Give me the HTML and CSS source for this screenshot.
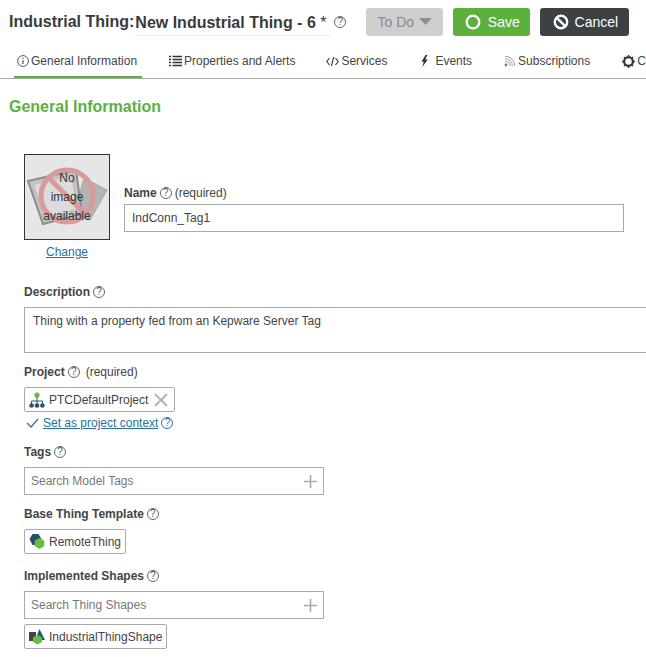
FILE: index.html
```html
<!DOCTYPE html>
<html lang="en">
<head>
<meta charset="utf-8">
<title>Industrial Thing</title>
<link rel="stylesheet" href="styles.css">
</head>
<body>
<header class="top">
  <h1 class="title">Industrial Thing:</h1>
  <div class="name-edit">New Industrial Thing - 6 <span class="star">*</span></div>
  <span class="help title-help">?</span>
  <button class="btn todo">To Do <svg class="caret" viewBox="0 0 13 7"><path d="M0 0h13L6.500 7z" fill="#8f8f8f"/></svg></button>
  <button class="btn save"><svg class="ico" viewBox="0 0 16 16"><circle cx="8" cy="8" r="6.300" fill="none" stroke="#fff" stroke-width="2.300"/></svg>Save</button>
  <button class="btn cancel"><svg class="ico" viewBox="0 0 16 16"><circle cx="8" cy="8" r="6.200" fill="none" stroke="#fff" stroke-width="2.400"/><path d="M3.800 3.800l8.400 8.400" stroke="#fff" stroke-width="2.400"/></svg>Cancel</button>
</header>
<nav class="tabs">
  <a class="tab active"><svg class="tab-ico" viewBox="0 0 12 12"><circle cx="6" cy="6" r="5.400" fill="none" stroke="#444" stroke-width="0.900"/><path d="M6 5v4M6 2.800v1.200" stroke="#444" stroke-width="1.100"/></svg>General Information</a>
  <a class="tab t-props"><svg class="tab-ico wide" viewBox="0 0 13 12"><path d="M0 1.500h2M0 4.500h2M0 7.500h2M0 10.500h2M3.500 1.500H13M3.500 4.500H13M3.500 7.500H13M3.500 10.500H13" stroke="#333" stroke-width="1.400"/></svg>Properties and Alerts</a>
  <a class="tab t-serv"><svg class="tab-ico code" viewBox="0 0 13 9"><path d="M3.500 1L.8 4.500l2.700 3.500M9.500 1l2.700 3.500L9.500 8M7.600 0L5.400 9" fill="none" stroke="#333" stroke-width="1.100"/></svg>Services</a>
  <a class="tab t-events"><svg class="tab-ico bolt" viewBox="0 0 7 12"><path d="M4.500 0L.5 6.800h2.300L1.300 12 6.800 4.400H4.200L6.300 0z" fill="#333"/></svg>Events</a>
  <a class="tab t-subs"><svg class="tab-ico" viewBox="0 0 12 12"><circle cx="2" cy="10" r="1.400" fill="#777"/><path d="M1 6.200A5 5 0 0 1 6 11M1 3.800A7.400 7.400 0 0 1 8.300 11M1 1.300A9.800 9.800 0 0 1 10.800 11" fill="none" stroke="#888" stroke-width="0.800"/></svg>Subscriptions</a>
  <a class="tab t-conf"><svg class="tab-ico" viewBox="0 0 12 12"><circle cx="6" cy="6" r="4" fill="none" stroke="#333" stroke-width="2"/><path d="M6 0v2M6 10v2M0 6h2M10 6h2M1.800 1.800l1.400 1.400M8.800 8.800l1.400 1.400M1.800 10.200l1.400-1.400M8.800 3.200l1.400-1.400" stroke="#333" stroke-width="1.300"/></svg>Configuration</a>
</nav>
<main class="content">
  <h2 class="section">General Information</h2>
  <div class="identity">
    <div class="image-col">
      <div class="image-box">
        <svg class="noimg" viewBox="0 0 86 86" aria-hidden="true">
          <path d="M60 24L83 36 66 66 50 60z" fill="#b4b4b4" stroke="#a5a5a5"/>
          <path d="M4 27L52 16 58 60 19 70z" fill="#c2c2c2" stroke="#8d8d8d" stroke-width="2"/>
          <path d="M10 31L47 22 52 55 22 63z" fill="#dcdcdc"/>
          <circle cx="43" cy="42" r="26" fill="none" stroke="#d89a9a" stroke-width="5"/>
          <path d="M25 24L61 60" stroke="#d89a9a" stroke-width="5"/>
        </svg>
        <div class="noimg-text">No<br>image<br>available</div>
      </div>
      <a class="link change">Change</a>
    </div>
    <div class="name-col">
      <div class="label name-label"><b>Name</b><span class="help">?</span>(required)</div>
      <div class="input name-input">IndConn_Tag1</div>
    </div>
  </div>
  <div class="label desc-label"><b>Description</b><span class="help">?</span></div>
  <div class="input textarea">Thing with a property fed from an Kepware Server Tag</div>

  <div class="label project-label"><b>Project</b><span class="help">?</span><span class="req">(required)</span></div>
  <div class="chip project-chip">
    <svg class="chip-ico" viewBox="0 0 16 16"><circle cx="8" cy="3" r="2.600" fill="#6ab343"/><path d="M8 5v4M2.500 12V9h11v3M8 9v3" fill="none" stroke="#24577a" stroke-width="1"/><circle cx="2.600" cy="13.500" r="2.300" fill="#24577a"/><circle cx="8" cy="13.500" r="2.300" fill="#24577a"/><circle cx="13.400" cy="13.500" r="2.300" fill="#24577a"/></svg>
    PTCDefaultProject
    <svg class="x" viewBox="0 0 14 14"><path d="M1 1l12 12M13 1L1 13" stroke="#b5b5b5" stroke-width="2"/></svg>
  </div>
  <div class="context">
    <svg class="check" viewBox="0 0 13 10"><path d="M1 5l4 4 7-8" fill="none" stroke="#2f6f9f" stroke-width="1.200"/></svg>
    <a class="link">Set as project context</a>
    <span class="help blue">?</span>
  </div>

  <div class="label tags-label"><b>Tags</b><span class="help">?</span></div>
  <div class="input search"><span>Search Model Tags</span><svg class="plus" viewBox="0 0 13 13"><path d="M6.500 0v13M0 6.500h13" stroke="#aaa" stroke-width="1.600"/></svg></div>

  <div class="label base-label"><b>Base Thing Template</b><span class="help">?</span></div>
  <div class="chip">
    <svg class="chip-ico" viewBox="0 0 16 16"><path d="M3.500 0h6l3 5-3 6h-6L.5 5z" fill="#24506b"/><path d="M10.500 4l4.800 2.800v5.400L10.500 15l-4.800-2.800V6.800z" fill="#6abf3f"/></svg>
    RemoteThing
  </div>

  <div class="label shapes-label"><b>Implemented Shapes</b><span class="help">?</span></div>
  <div class="input search"><span>Search Thing Shapes</span><svg class="plus" viewBox="0 0 13 13"><path d="M6.500 0v13M0 6.500h13" stroke="#aaa" stroke-width="1.600"/></svg></div>
  <div class="chip shape-chip">
    <svg class="chip-ico" viewBox="0 0 16 16"><path d="M0 3h7v9H0z" fill="#444"/><path d="M10.500 0L16 11H6z" fill="#24577a"/><path d="M8.500 6l4.500 2.500v4.500l-4.500 2.500L4 13V8.500z" fill="#6abf3f"/></svg>
    IndustrialThingShape
  </div>
</main>
</body>
</html>
```

FILE: styles.css
```css
* { box-sizing: border-box; }
html, body { margin: 0; padding: 0; height: 657px; overflow: hidden; background: #fff; }
body { width: 646px; font-family: "Liberation Sans", Arial, sans-serif; font-size: 12px; color: #444; }

.top { display: flex; align-items: center; height: 44px; padding: 8px 0 8px 9px; }
.title { margin: 0; font-size: 16px; font-weight: bold; color: #3a3a3a; white-space: nowrap; }
.name-edit { width: 196px; margin-left: 1px; height: 28px; line-height: 30px; font-size: 16px; font-weight: bold; color: #3a3a3a; border-bottom: 1px solid #eee; white-space: nowrap; }
.star { font-weight: normal; }
.help { display: inline-flex; align-items: center; justify-content: center; width: 12px; height: 12px; flex: none; border: 1px solid #666; border-radius: 50%; font-size: 10px; line-height: 10px; font-weight: normal; color: #555; }
.title-help { margin-left: 3px; margin-right: 20px; }
.btn { display: flex; align-items: center; justify-content: center; height: 28px; border: 0; border-radius: 3px; font-family: inherit; font-size: 14px; padding: 0; color: #fff; }
.todo { width: 77px; background: #cfcfcf; color: #8a8a8a; gap: 5px; margin-right: 10px; }
.caret { width: 13px; height: 7px; margin-top: -2px; }
.save { width: 77px; background: #5bb13c; margin-right: 10px; gap: 7px; padding-left: 1px; }
.cancel { width: 89px; background: #3b4145; gap: 6px; padding-left: 1px; }
.ico { width: 16px; height: 16px; }

.tabs { display: flex; height: 35px; border-bottom: 1px solid #aaa; overflow: hidden; padding-left: 14px; }
.tab { display: flex; align-items: center; height: 34px; font-size: 12px; color: #444; white-space: nowrap; flex: none; }
.tab.active { width: 128px; padding-left: 3px; padding-top: 2px; border-bottom: 2px solid #5bb13c; }
.tab-ico { width: 12px; height: 12px; margin-right: 2px; flex: none; }
.tab-ico.wide { width: 13px; }
.tab-ico.code { width: 13px; height: 9px; margin-right: 2px; }
.tab-ico.bolt { width: 7px; height: 12px; margin-right: 7px; }
.t-props { margin-left: 27px; }
.t-serv { margin-left: 31px; }
.t-events { margin-left: 34px; }
.t-subs { margin-left: 32px; }
.t-conf { margin-left: 32px; }
.t-conf .tab-ico { width: 13px; height: 13px; }

.content { padding: 0 0 0 24px; }
.section { margin: 0 0 18px -15px; padding-top: 19px; height: 57px; font-size: 16px; line-height: 18px; font-weight: bold; color: #5bb13c; }
.identity { display: flex; gap: 14px; height: 130px; }
.image-col { width: 86px; display: flex; flex-direction: column; align-items: center; }
.image-box { position: relative; width: 86px; height: 86px; border: 1px solid #333; background: #e6e6e6; overflow: hidden; flex: none; }
.noimg { position: absolute; left: -1px; top: -1px; width: 86px; height: 86px; }
.noimg-text { position: absolute; inset: 0; padding-top: 14px; text-align: center; font-size: 12px; line-height: 19px; color: #333; }
.link { color: #2a6f9e; text-decoration: underline; }
.change { margin-top: 5px; line-height: 14px; }
.name-col { width: 500px; padding-top: 32px; }
.label { display: flex; align-items: center; gap: 3px; line-height: 14px; height: 14px; color: #444; }
.label b { font-weight: bold; color: #444; }
.input { display: flex; align-items: center; height: 28px; border: 1px solid #aaa; padding: 0 6px; color: #444; background: #fff; }
.name-label { margin-bottom: 4px; }
.name-input { width: 500px; padding-left: 7px; }
.desc-label { margin-top: 1px; margin-bottom: 8px; }
.textarea { width: 640px; height: 46px; align-items: flex-start; padding-top: 6px; padding-left: 8px; line-height: 14px; }
.project-label { margin-top: 12px; margin-bottom: 8px; }
.req { margin-left: 3px; }
.chip { display: flex; align-items: center; gap: 4px; width: max-content; height: 25px; border: 1px solid #aaa; border-radius: 2px; padding: 0 4px; color: #444; background: #fff; }
.chip-ico { width: 16px; height: 16px; flex: none; }
.project-chip { padding-right: 6px; }
.x { width: 14px; height: 14px; margin-left: 2px; }
.context { display: flex; align-items: center; gap: 3px; height: 14px; margin-top: 4px; padding-left: 2px; }
.check { width: 13px; height: 10px; margin-right: 1px; }
.blue { border-color: #2f6f9f; color: #2f6f9f; }
.tags-label { margin-top: 15px; margin-bottom: 8px; }
.search { width: 300px; justify-content: space-between; color: #777; padding-right: 6px; }
.plus { width: 13px; height: 13px; }
.base-label { margin-top: 12px; margin-bottom: 8px; }
.shapes-label { margin-top: 15px; margin-bottom: 8px; }
.shape-chip { margin-top: 5px; }
```
